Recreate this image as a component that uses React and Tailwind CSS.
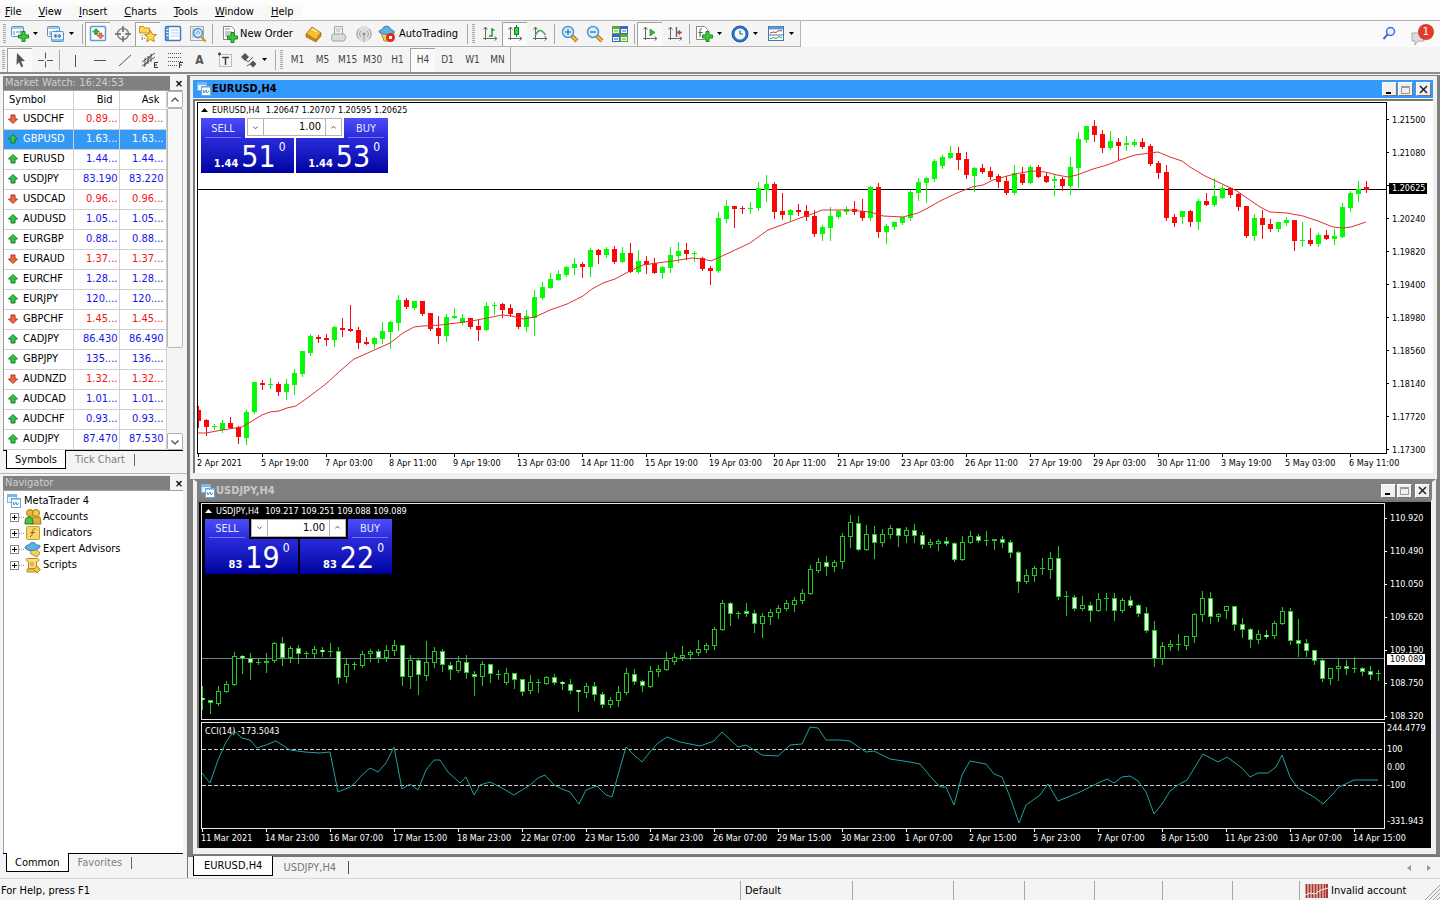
import { useState } from 'react';
import clsx from 'clsx';

// [kind, high, bodyTop, bodyBottom, low], one entry every 8px
const EURUSD = [
  ['d',406,410,421,427],['d',419,420,427,435],['u',424,426,427,429],['u',420,423,430,432],['d',417,423,428,428],['d',426,427,437,443],
  ['u',410,412,438,444],['u',382,382,412,413],['d',380,383,385,389],['u',378,384,385,388],['d',382,384,392,395],['u',379,384,392,399],
  ['u',369,373,385,394],['u',351,351,374,376],['u',334,336,353,355],['d',335,337,339,342],['d',334,338,340,345],['u',326,327,340,346],
  ['d',318,328,330,336],['d',305,329,331,331],['d',327,330,343,348],['d',337,342,344,344],['u',337,338,344,348],['u',322,331,339,343],
  ['u',321,322,332,348],['u',295,300,323,330],['d',298,300,307,308],['u',301,301,308,309],['d',301,301,314,315],['d',313,313,329,330],
  ['d',316,328,336,343],['u',314,317,336,341],['u',308,316,318,318],['u',314,318,323,324],['d',318,318,327,328],['d',320,326,330,340],
  ['u',302,306,330,330],['u',302,305,306,314],['d',303,304,310,317],['d',304,308,314,316],['d',313,313,327,328],['u',310,316,327,331],
  ['u',290,297,318,335],['u',282,287,298,299],['u',273,279,288,288],['u',270,274,280,280],['u',266,267,275,276],['u',258,264,268,274],
  ['d',262,264,267,277],['u',248,250,267,276],['d',249,250,255,263],['u',247,249,255,257],['d',246,249,262,263],['u',247,253,262,262],
  ['d',243,253,272,272],['u',250,261,272,273],['d',256,261,265,273],['d',258,263,273,273],['u',266,267,273,278],['u',247,255,268,272],
  ['u',242,251,256,262],['d',243,250,254,259],['u',251,253,254,261],['d',257,258,269,270],['d',266,268,271,284],['u',212,218,271,272],
  ['u',200,206,219,222],['d',206,206,209,227],['d',206,208,209,213],['u',202,208,209,213],['u',182,188,208,210],['u',175,184,190,201],
  ['d',182,184,212,218],['d',193,211,215,219],['u',209,210,215,221],['d',204,210,212,215],['d',205,211,217,220],['d',210,216,234,236],
  ['u',225,227,234,240],['u',207,216,228,240],['u',210,211,217,218],['u',206,209,212,214],['d',201,209,212,214],['d',199,211,218,220],
  ['u',186,187,218,220],['d',183,187,232,237],['u',224,226,232,243],['u',222,222,227,229],['u',217,217,223,224],['u',190,192,218,220],
  ['u',178,182,193,200],['u',177,178,183,202],['u',159,161,179,181],['u',155,157,166,168],['u',146,153,158,158],['d',147,153,160,169],
  ['d',152,159,175,178],['u',167,168,176,191],['d',164,168,172,173],['d',167,171,177,179],['d',174,176,182,187],['d',176,181,193,194],
  ['u',165,173,193,194],['d',167,174,183,184],['u',165,167,183,183],['d',165,167,177,177],['d',173,176,182,182],['u',174,179,181,195],
  ['d',177,179,186,190],['u',157,167,186,194],['u',132,139,168,187],['u',126,126,140,142],['d',120,126,135,141],['d',130,134,148,152],
  ['u',131,141,148,149],['d',138,142,146,159],['u',136,143,145,150],['u',139,142,145,146],['d',138,142,147,148],['d',144,146,164,165],
  ['d',161,163,173,178],['d',165,172,218,220],['d',214,217,223,226],['u',211,211,217,223],['d',210,211,222,226],['u',199,201,222,229],
  ['d',193,201,205,205],['u',178,196,205,206],['u',185,188,198,198],['d',187,188,195,197],['d',193,194,207,210],['d',206,206,236,237],
  ['u',214,218,236,240],['d',210,218,225,238],['d',219,224,229,231],['u',222,222,229,231],['u',217,220,223,225],['d',220,220,241,250],
  ['u',222,240,241,246],['d',228,240,244,245],['u',233,235,244,246],['d',230,235,239,239],['u',229,236,239,244],['u',203,207,237,237],
  ['u',191,193,208,211],['u',181,189,194,201],['d',181,187,190,192],
];

const EURUSD_MA =
  '198,433 206,433 222,430 242,427 252,421 262,415 270,412 279,411 287,408 296,406 303,401 310,396 327,383 340,371 354,359 370,352 390,343 403,333 414,327 423,326 440,325 457,323 477,320 492,317 502,315 512,316 523,319 535,317 550,310 567,304 583,296 592,289 603,283 615,279 628,272 643,265 657,263 673,261 692,258 703,259 711,261 720,257 733,251 750,243 768,230 787,223 800,218 812,214 822,210 850,210 870,212 883,216 903,217 918,213 928,208 940,201 957,193 972,187 983,185 993,180 1007,176 1020,173 1032,171 1045,172 1057,175 1068,177 1077,175 1093,169 1107,165 1120,160 1135,155 1150,153 1158,152 1170,157 1182,161 1190,167 1205,176 1218,182 1237,191 1247,198 1260,207 1270,212 1287,213 1303,216 1318,221 1333,227 1343,228 1351,227 1366,222';

const USDJPY = [
  ['d',686,698,700,709],['d',700,700,703,713],['u',686,691,704,705],['u',681,684,692,692],['u',652,656,685,685],['d',655,656,658,673],
  ['d',653,658,663,679],['x',658,662,662,664],['u',653,661,663,672],['u',642,643,661,662],['d',637,643,658,665],['u',646,648,658,662],
  ['d',645,648,654,663],['x',651,653,654,658],['u',646,649,654,657],['d',647,650,652,656],['x',643,651,652,656],['d',647,651,678,683],
  ['u',658,664,677,682],['x',662,664,665,669],['u',651,654,666,667],['u',649,651,654,661],['d',649,651,658,662],['u',645,650,658,661],
  ['u',640,645,651,655],['d',645,645,677,685],['u',655,660,677,688],['d',658,660,675,694],['u',641,662,676,680],['u',647,651,663,667],
  ['d',649,651,665,671],['d',662,665,670,679],['u',656,661,671,672],['d',655,662,673,678],['d',671,674,677,695],['u',661,664,677,685],
  ['d',664,664,674,682],['x',670,674,674,679],['u',668,673,683,684],['d',673,673,680,688],['d',679,679,692,695],['u',675,682,691,693],
  ['x',679,682,683,692],['u',676,677,684,684],['d',674,677,683,684],['d',681,682,684,689],['d',679,684,691,693],['d',690,690,692,711],
  ['u',683,686,693,697],['d',682,686,695,700],['d',692,694,705,707],['u',697,700,705,707],['u',686,692,701,706],['u',668,673,693,694],
  ['d',669,674,682,684],['d',680,681,686,691],['u',666,671,687,687],['u',665,669,672,676],['u',652,660,670,670],['u',653,657,662,664],
  ['u',646,655,658,660],['u',650,652,655,659],['u',640,649,653,655],['u',643,645,650,652],['u',627,629,646,649],['u',600,603,630,630],
  ['d',602,603,614,625],['x',611,613,613,618],['d',603,611,614,616],['d',610,613,624,632],['u',613,616,624,637],['u',609,612,617,624],
  ['u',605,608,613,618],['u',600,603,609,610],['u',597,600,605,611],['u',589,593,601,603],['u',565,569,594,594],['u',558,562,571,572],
  ['d',556,562,567,575],['u',560,562,567,571],['u',533,536,562,568],['u',515,522,537,547],['d',516,523,550,550],['u',525,534,550,550],
  ['d',526,534,543,558],['u',529,534,543,546],['u',525,528,535,538],['d',528,528,536,546],['u',527,530,536,542],['d',524,530,536,542],
  ['d',532,535,545,548],['u',539,542,545,547],['u',539,541,544,550],['d',537,541,544,545],['d',542,543,560,561],['u',536,542,560,560],
  ['u',531,536,543,543],['d',534,536,541,542],['x',531,540,541,545],['u',539,539,541,549],['d',536,539,543,547],['d',540,542,553,557],
  ['d',551,552,582,592],['u',569,575,582,583],['u',566,568,576,581],['x',558,568,569,574],['u',552,558,570,578],['d',546,558,597,599],
  ['x',591,596,597,615],['d',595,597,609,610],['u',596,605,609,610],['d',602,605,611,621],['u',593,599,611,611],['x',593,598,599,610],
  ['d',593,598,611,620],['u',598,600,611,612],['d',596,600,606,607],['d',604,605,614,616],['d',607,613,631,632],['d',621,630,659,666],
  ['u',642,646,659,664],['u',640,644,647,650],['x',634,644,645,650],['u',636,636,646,649],['u',613,614,637,642],['u',591,598,615,621],
  ['d',592,598,617,623],['u',613,614,617,621],['u',606,606,611,618],['d',606,606,625,630],['d',618,624,630,637],['d',628,629,640,647],
  ['u',630,634,640,643],['d',630,635,637,638],['u',621,623,636,638],['u',607,611,624,624],['d',608,611,641,644],['d',619,640,644,656],
  ['d',639,643,651,656],['d',650,650,661,664],['d',658,660,679,681],['u',668,668,679,684],['u',659,666,669,680],['d',660,666,669,674],
  ['x',657,668,668,672],['d',667,668,672,675],['d',666,671,675,679],['x',670,673,673,680],
];

const CCI =
  '202,773 210,783 218,760 226,742 234,731 242,738 250,740 257,748 266,745 276,741 290,750 305,752 320,753 330,752 338,792 350,787 355,783 362,775 370,768 378,772 386,763 394,747 402,789 410,784 418,790 426,770 434,760 440,760 448,772 460,783 466,777 474,795 480,785 490,782 500,787 514,795 530,785 538,778 545,775 554,785 562,789 570,792 579,804 586,790 597,786 606,795 612,797 618,775 626,747 634,755 642,762 650,752 658,743 667,737 680,742 700,746 714,741 722,732 738,747 746,745 762,755 778,756 790,745 802,744 810,727 818,728 826,740 840,740 850,741 866,752 874,751 890,759 910,762 920,764 930,776 940,787 946,787 954,805 962,775 970,761 986,764 994,774 1002,777 1010,797 1019,823 1026,805 1040,795 1048,784 1058,801 1068,797 1080,792 1096,784 1107,779 1114,783 1122,777 1130,776 1138,781 1146,792 1154,814 1162,804 1170,791 1178,785 1187,780 1195,767 1203,754 1218,762 1227,757 1242,768 1250,777 1258,773 1268,773 1276,767 1282,755 1290,777 1298,788 1314,797 1323,804 1330,797 1339,787 1354,780 1378,780';

const SYMBOLS = [
  ['USDCHF', '0.89...', '0.89...', 'down'],
  ['GBPUSD', '1.63...', '1.63...', 'up'],
  ['EURUSD', '1.44...', '1.44...', 'up'],
  ['USDJPY', '83.190', '83.220', 'up'],
  ['USDCAD', '0.96...', '0.96...', 'down'],
  ['AUDUSD', '1.05...', '1.05...', 'up'],
  ['EURGBP', '0.88...', '0.88...', 'up'],
  ['EURAUD', '1.37...', '1.37...', 'down'],
  ['EURCHF', '1.28...', '1.28...', 'up'],
  ['EURJPY', '120....', '120....', 'up'],
  ['GBPCHF', '1.45...', '1.45...', 'down'],
  ['CADJPY', '86.430', '86.490', 'up'],
  ['GBPJPY', '135....', '136....', 'up'],
  ['AUDNZD', '1.32...', '1.32...', 'down'],
  ['AUDCAD', '1.01...', '1.01...', 'up'],
  ['AUDCHF', '0.93...', '0.93...', 'up'],
  ['AUDJPY', '87.470', '87.530', 'up'],
];

const EURUSD_TIMES = ['2 Apr 2021', '5 Apr 19:00', '7 Apr 03:00', '8 Apr 11:00', '9 Apr 19:00', '13 Apr 03:00', '14 Apr 11:00', '15 Apr 19:00', '19 Apr 03:00', '20 Apr 11:00', '21 Apr 19:00', '23 Apr 03:00', '26 Apr 11:00', '27 Apr 19:00', '29 Apr 03:00', '30 Apr 11:00', '3 May 19:00', '5 May 03:00', '6 May 11:00'];
const USDJPY_TIMES = ['11 Mar 2021', '14 Mar 23:00', '16 Mar 07:00', '17 Mar 15:00', '18 Mar 23:00', '22 Mar 07:00', '23 Mar 15:00', '24 Mar 23:00', '26 Mar 07:00', '29 Mar 15:00', '30 Mar 23:00', '1 Apr 07:00', '2 Apr 15:00', '5 Apr 23:00', '7 Apr 07:00', '8 Apr 15:00', '11 Apr 23:00', '13 Apr 07:00', '14 Apr 15:00'];
const EURUSD_PRICES = ['1.21500', '1.21080', '', '1.20240', '1.19820', '1.19400', '1.18980', '1.18560', '1.18140', '1.17720', '1.17300'];
const USDJPY_PRICES = ['110.920', '110.490', '110.050', '109.620', '109.190', '108.750', '108.320'];

const MENU = ['File', 'View', 'Insert', 'Charts', 'Tools', 'Window', 'Help'];
const TIMEFRAMES = ['M1', 'M5', 'M15', 'M30', 'H1', 'H4', 'D1', 'W1', 'MN'];

/* ---------- icons ---------- */

function Svg({ size = 18, children }) {
  return (
    <svg width={size} height={size} viewBox={`0 0 ${size} ${size}`} fill="none" className="shrink-0" aria-hidden="true">
      {children}
    </svg>
  );
}

const Plus = ({ x = 8, y = 6 }) => (
  <path transform={`translate(${x} ${y})`} d="M4 .5h3V4h3.500v3H7v3.500H4V7H.5V4H4z" fill="#35cf3a" stroke="#128a1b" />
);

const ChartWindow = ({ x = 0, y = 0 }) => (
  <g transform={`translate(${x} ${y})`}>
    <rect x=".5" y=".5" width="12" height="10" rx="1" fill="#fff" stroke="#4d94d0" />
    <rect x="1" y="1" width="11" height="2" fill="#9dc9ee" />
    <path d="M3 5v4M5 6h5M10 4v5" stroke="#5c86ae" />
  </g>
);

const NewChartIcon = () => <Svg><ChartWindow y={1} /><Plus x={7} y={6} /></Svg>;
const ProfilesIcon = () => <Svg><ChartWindow x={0} y={1} /><rect x="4.500" y="6.500" width="12" height="10" rx="1" fill="#e8f3fc" stroke="#4d94d0" /><path d="M5 15h11" stroke="#8dbfe8" strokeWidth="2" /><path d="M7 11l2-2v4zM14 11l-2-2v4zM8 11h5" fill="#5c86ae" stroke="#5c86ae" /></Svg>;
const MarketWatchIcon = () => (
  <Svg>
    <rect x="1.500" y="1.500" width="15" height="14" rx="1" fill="#fff" stroke="#5a9fd6" strokeWidth="1.500" />
    <path d="M7 3.500l3.500 3.500H8.500v2.500h-3V7h-2z" fill="#35b03c" stroke="#1d8226" strokeWidth=".6" />
    <path d="M11.500 14l-3.500-3.500h2V8h3v2.500h2z" fill="#f07a4c" stroke="#c0451e" strokeWidth=".6" />
  </Svg>
);
const TargetIcon = () => <Svg><circle cx="9" cy="9" r="5.500" stroke="#888" strokeWidth="1.500" /><path d="M9 1v6M9 11v6M1 9h6M11 9h6" stroke="#666" strokeWidth="1.500" /></Svg>;
const FavoritesIcon = () => (
  <Svg>
    <path d="M.5 1.500h4l1 1.500h5v5h-10z" fill="#fbd65c" stroke="#c49521" />
    <path d="M3 10v6M3 13.500h4" stroke="#777" strokeDasharray="1 1" />
    <path d="M11.500 5.500l1.800 3.800 4.200.4-3.100 2.800 1 4.200-3.900-2.200-3.800 2.200.9-4.200-3-2.800 4.100-.4z" fill="#ffd84e" stroke="#b98a1c" />
  </Svg>
);
const DataWindowIcon = () => <Svg><rect x="1.500" y="1.500" width="15" height="14" rx="1" fill="#fff" stroke="#3c7fc0" strokeWidth="1.500" /><path d="M3.500 2v13" stroke="#5c9cd6" strokeWidth="3" /><path d="M7 5h8M7 8h8M7 11h8" stroke="#b7cde2" /><path d="M3.500 4v1M3.500 7v1M3.500 10v1" stroke="#fff" strokeWidth="2" /></Svg>;
const TesterIcon = () => <Svg><rect x="1.500" y="1.500" width="13" height="14" fill="#eee" stroke="#a9a9a9" /><path d="M4 3v10M7 4v8" stroke="#9db8cf" /><circle cx="9" cy="8" r="4.500" fill="#cfe6f8" stroke="#4a90cd" strokeWidth="1.500" /><path d="M7 9l2-3 2 3" stroke="#7e9db8" /><path d="M12.500 12l4 4.500" stroke="#d39b27" strokeWidth="2.500" /></Svg>;
const NewOrderIcon = () => <Svg><path d="M2.500 1.500h8l3 3v10h-11z" fill="#fff" stroke="#888" /><path d="M4 4h5M4 7h7M4 9h7M4 11h4" stroke="#8f8f8f" /><Plus x={6} y={7} /></Svg>;
const BookIcon = () => <Svg><path d="M1 9l6-7 9 6-5 7z" fill="#f3bd3c" stroke="#b27b13" /><path d="M1 9v3l10 5 5-6V8l-5 7z" fill="#c98c1b" stroke="#a06c10" strokeWidth=".7" /><path d="M7 4l5 3" stroke="#ffe7a3" strokeWidth="2" /></Svg>;
const PrinterIcon = () => <Svg><path d="M4.500 1.500h8v8h-8z" fill="#f0f0f0" stroke="#a5a5a5" /><path d="M6 4h5M6 6h4" stroke="#b5b5b5" /><path d="M2 13a2.500 2.500 0 012-4h9a3 3 0 012 5 2 2 0 01-2 2H3a2 2 0 01-1-3z" fill="#dcdcdc" stroke="#a0a0a0" /></Svg>;
const SignalIcon = () => <Svg><circle cx="9" cy="9" r="8" fill="#dedede" /><circle cx="9" cy="9" r="1.500" fill="#8e8e8e" /><path d="M6 12a4 4 0 010-6M12 6a4 4 0 010 6M4 14a7 7 0 010-10M14 4a7 7 0 010 10M9 10v7" stroke="#a2a2a2" /></Svg>;
const AutoTradingIcon = () => (
  <Svg>
    <path d="M3 8h12l-3 8H6z" fill="#f2ca4c" stroke="#b98c1f" />
    <path d="M1 7c0-2 2-2 3-2 1-5 8-5 9 0 2 0 4 1 3 3-4 2-11 2-15-1z" fill="#63b0e2" stroke="#357fb4" />
    <circle cx="12.500" cy="12.500" r="4.500" fill="#dc2c20" />
    <rect x="11" y="11" width="3" height="3" fill="#fff" />
  </Svg>
);
const Axes = () => <path d="M4.500 2v13M2 13.500h14M2.500 4.500l2-2.500 2 2.500M13.500 11.500l2.500 2-2.500 2" stroke="#666" />;
const BarChartIcon = () => <Svg><Axes /><path d="M8 11h3V3M11 5h2.500" stroke="#1d9a33" strokeWidth="1.500" /></Svg>;
const CandleIcon = () => <Svg><Axes /><path d="M10.500 0v12" stroke="#138a24" /><rect x="8.500" y="2.500" width="4" height="7" fill="#2fd13f" stroke="#138a24" /></Svg>;
const LineIcon = () => <Svg><Axes /><path d="M4.500 10c3-6 6-6 10 0" stroke="#3fa84c" strokeWidth="1.500" /></Svg>;
const ZoomIcon = ({ plus }) => <Svg><path d="M11 11l5 5" stroke="#a77b1d" strokeWidth="4" /><path d="M11 11l5 5" stroke="#f0c04a" strokeWidth="2" /><circle cx="7" cy="7" r="5.500" fill="#d9edfb" stroke="#4a97d6" strokeWidth="1.500" /><path d={plus ? 'M4 7h6M7 4v6' : 'M4 7h6'} stroke="#3c84c1" strokeWidth="1.500" /></Svg>;
const TileIcon = () => (
  <Svg>
    {[[1, 1, '#58ab2c'], [9, 1, '#3567c9'], [1, 9, '#3567c9'], [9, 9, '#58ab2c']].map(([x, y, c]) => (
      <g key={`${x}${y}`}><rect x={x} y={y} width="8" height="8" fill={c} /><rect x={x + 1} y={y + 3} width="6" height="4" fill="#eef5e8" /><path d={`M${x + 2} ${y + 5}h4`} stroke={c} /></g>
    ))}
  </Svg>
);
const AutoScrollIcon = () => <Svg><Axes /><path d="M9 4v7l5-3.500z" fill="#35b846" stroke="#158a26" strokeWidth=".7" /></Svg>;
const ShiftIcon = () => <Svg><Axes /><path d="M10.500 2v10" stroke="#3a6ea8" strokeWidth="1.500" /><path d="M16 7.500h-4M14 5.500l-2 2 2 2" stroke="#c5431d" strokeWidth="1.500" /></Svg>;
const IndicatorsIcon = () => <Svg><path d="M1.500 1.500h8l3 3v10h-11z" fill="#fff" stroke="#888" /><path d="M7 4c-2-1-2 1-2 3v5M3.500 7.500h4" stroke="#555" /><Plus x={7} y={6} /></Svg>;
const ClockIcon = () => <Svg><circle cx="9" cy="9" r="8" fill="#2a76c4" stroke="#1c5594" /><circle cx="9" cy="9" r="5.500" fill="#f1f7fc" /><path d="M9 5.500V9h3" stroke="#4d6478" strokeWidth="1.200" /></Svg>;
const TemplateIcon = () => <Svg><rect x="1.500" y="1.500" width="15" height="14" fill="#fff" stroke="#3e78b5" /><path d="M2 3h14" stroke="#5b9bd8" strokeWidth="3" /><path d="M2 10h14" stroke="#3e78b5" /><path d="M3 8l3-1 3 .5 3-2 3 .5" stroke="#b4452c" /><path d="M3 14l3-1.500 3 1 3-2 3 1.500" stroke="#3d9a45" /></Svg>;

const CursorIcon = () => <Svg><path d="M6 2l8 8-4 .3 2.300 5-2 1-2.300-5L5.500 14z" fill="#555" /></Svg>;
const CrossIcon = () => <Svg><path d="M9.500 1.500v6M9.500 10.500v6M2 9.500h6M11 9.500h6" stroke="#555" /></Svg>;
const VLineIcon = () => <Svg><path d="M9.500 4v12" stroke="#555" /></Svg>;
const HLineIcon = () => <Svg><path d="M3 9.500h12" stroke="#555" /></Svg>;
const TrendIcon = () => <Svg><path d="M3 15L15 4" stroke="#555" /></Svg>;
const ChannelIcon = () => <Svg><path d="M1 11L14 2M1 15L14 6M4 7v8M7 5v8M10 3v8M3 16l8-13" stroke="#555" /><path d="M17 11.500h-3.500v5H17M13.500 14H16" stroke="#333" /></Svg>;
const FiboIcon = () => <Svg><path d="M2 2.500h14M2 6.500h14M2 10.500h14M2 14.500h9" stroke="#555" strokeDasharray="1 1" /><path d="M17 11.500h-3.500V17M13.500 14H16" stroke="#333" /></Svg>;
const LabelIcon = () => <Svg><rect x="3.500" y="3.500" width="12" height="12" stroke="#888" strokeDasharray="1 1" /><path d="M6 6.500h7M9.500 6v8M2 3h3M3.500 1.500v3" stroke="#444" strokeWidth="1.500" /></Svg>;
const ArrowsIcon = () => <Svg><path d="M5 2l4 4-4 4-4-4zM13 9.500l3.500 3.500-3.500 3.500L9.500 13z" fill="#555" /><path d="M6 9l2 2 5-5M7 15l3-2" stroke="#555" /></Svg>;

const WindowIcon = () => (
  <Svg size={14}>
    <rect x=".5" y=".5" width="9" height="8" fill="#e7f3fd" stroke="#7db6e6" />
    <path d="M1 2h8" stroke="#7db6e6" strokeWidth="2" />
    <rect x="4.500" y="4.500" width="9" height="9" fill="#fff" stroke="#6aa9de" />
    <path d="M5 5.500h8" stroke="#9ccaf0" />
    <path d="M6 8l1 3 2-3 1 3 2-2" stroke="#4a8ac4" />
  </Svg>
);

function Arrow({ dir }) {
  return (
    <svg width="12" height="12" viewBox="0 0 12 12" className="shrink-0" aria-hidden="true">
      {dir === 'up' ? (
        <path d="M6 1.500l4.500 4.500H8v4H4V6H1.500z" fill="#35c544" stroke="#12752a" />
      ) : (
        <path d="M6 10.500L1.500 6H4V2h4v4h2.500z" fill="#f0683c" stroke="#a8361a" />
      )}
    </svg>
  );
}

const Caret = () => <svg width="5" height="3" viewBox="0 0 5 3" aria-hidden="true"><path d="M0 0h5L2.500 3z" fill="#000" /></svg>;

/* ---------- toolbar ---------- */

function ToolButton({ label, icon, active }) {
  return (
    <button aria-label={label} className={clsx('flex h-6 w-[25px] items-center justify-center', active && 'border-l border-t border-[#a0a0a0] bg-[#fafafa]')}>
      {icon}
    </button>
  );
}

function DropButton({ label, icon }) {
  return (
    <button aria-label={label} className="flex h-6 w-9 items-center gap-1 pl-[3px]">
      {icon}
      <Caret />
    </button>
  );
}

const Separator = () => <span className="mx-[2px] h-5 w-px bg-[#a8a8a8]" />;
const Grip = () => <span className="mx-[2px] h-5 w-[3px] bg-[repeating-linear-gradient(to_bottom,#a8a8a8_0_1px,#f4f4f4_1px_2px)]" />;

function MainToolbar() {
  return (
    <div className="flex h-[27px] items-center border-t border-[#b4b4b4] bg-[#fafafa] text-[11px]">
      <div className="flex h-full items-center border-r border-b border-[#b4b4b4] bg-[#f4f4f4] pl-px">
        <Grip />
        <DropButton label="New chart" icon={<NewChartIcon />} />
        <DropButton label="Profiles" icon={<ProfilesIcon />} />
        <Separator />
        <ToolButton label="Market Watch" icon={<MarketWatchIcon />} active />
        <ToolButton label="Crosshair" icon={<TargetIcon />} />
        <ToolButton label="Navigator" icon={<FavoritesIcon />} active />
        <ToolButton label="Data Window" icon={<DataWindowIcon />} />
        <ToolButton label="Strategy Tester" icon={<TesterIcon />} />
        <Separator />
        <button className="flex h-6 w-[86px] items-center gap-px pl-[6px]"><NewOrderIcon />New Order</button>
        <ToolButton label="MetaEditor" icon={<BookIcon />} />
        <ToolButton label="Print" icon={<PrinterIcon />} />
        <ToolButton label="Signals" icon={<SignalIcon />} />
        <button className="flex h-6 w-[89px] items-center gap-[3px] pl-[2px]"><AutoTradingIcon />AutoTrading</button>
        <Separator />
        <Grip />
        <ToolButton label="Bar chart" icon={<BarChartIcon />} />
        <ToolButton label="Candlesticks" icon={<CandleIcon />} active />
        <ToolButton label="Line chart" icon={<LineIcon />} />
        <Separator />
        <ToolButton label="Zoom in" icon={<ZoomIcon plus />} />
        <ToolButton label="Zoom out" icon={<ZoomIcon />} />
        <ToolButton label="Tile windows" icon={<TileIcon />} />
        <Separator />
        <ToolButton label="Auto scroll" icon={<AutoScrollIcon />} active />
        <ToolButton label="Chart shift" icon={<ShiftIcon />} />
        <Separator />
        <DropButton label="Indicators" icon={<IndicatorsIcon />} />
        <DropButton label="Periods" icon={<ClockIcon />} />
        <DropButton label="Templates" icon={<TemplateIcon />} />
      </div>
      <div className="ml-auto flex items-center gap-3 pr-[6px]">
        <button aria-label="Search">
          <Svg><circle cx="10.500" cy="6.500" r="4" fill="#eaf1fd" stroke="#3b6fd8" strokeWidth="1.500" /><path d="M7.500 9.500l-4 4.500" stroke="#3b6fd8" strokeWidth="2" /></Svg>
        </button>
        <button aria-label="Messages" className="relative flex h-6 w-6 items-end">
          <Svg><path d="M2 5h12v8H8l-3 4v-4H2z" fill="#ddd" stroke="#aaa" /></Svg>
          <span className="absolute right-0 top-[2px] flex h-4 w-4 items-center justify-center rounded-full bg-[#e03a2c] text-[11px] text-white">1</span>
        </button>
      </div>
    </div>
  );
}

function LineToolbar() {
  const [active, setActive] = useState('H4');

  return (
    <div className="flex h-[27px] items-center border-b-2 border-[#8a8a8a] bg-[#f4f4f4] text-[10px] text-[#444]">
      <Grip />
      <ToolButton label="Cursor" icon={<CursorIcon />} active />
      <ToolButton label="Crosshair" icon={<CrossIcon />} />
      <Separator />
      <ToolButton label="Vertical line" icon={<VLineIcon />} />
      <ToolButton label="Horizontal line" icon={<HLineIcon />} />
      <ToolButton label="Trendline" icon={<TrendIcon />} />
      <ToolButton label="Equidistant channel" icon={<ChannelIcon />} />
      <ToolButton label="Fibonacci" icon={<FiboIcon />} />
      <ToolButton label="Text" icon={<span className="text-xs font-bold text-[#555]">A</span>} />
      <ToolButton label="Text label" icon={<LabelIcon />} />
      <DropButton label="Arrows" icon={<ArrowsIcon />} />
      <Separator />
      <Grip />
      {TIMEFRAMES.map((tf) => (
        <button
          key={tf}
          onClick={() => setActive(tf)}
          className={clsx('h-6 w-[25px] text-center', active === tf && 'border-l border-t border-[#a0a0a0] bg-[#fafafa]')}
        >
          {tf}
        </button>
      ))}
      <span className="h-full w-px bg-[#a8a8a8]" />
    </div>
  );
}

/* ---------- side panels ---------- */

function PanelTitle({ children }) {
  return (
    <div className="flex h-[15px] items-center gap-[3px] pl-[3px] pt-px">
      <h2 className="h-[14px] w-[167px] bg-[#808080] pl-[2px] text-[11px] leading-[13px] text-[#d0d0d0]">{children}</h2>
      <button aria-label="Close panel" className="w-3 text-[11px] font-bold leading-[13px]">×</button>
    </div>
  );
}

function PanelTabs({ active, other }) {
  return (
    <div className="ml-[3px] mr-1 flex h-[19px] border-t border-black pl-[3px]">
      <button className="-mt-px border-x border-b border-black bg-white px-2 pt-px">{active}</button>
      <button className="px-[9px] text-[#808080]">{other}</button>
      <span className="my-[3px] w-px bg-[#666]" />
    </div>
  );
}

function MarketWatch() {
  return (
    <section>
      <PanelTitle>Market Watch: 16:24:53</PanelTitle>
      <div className="ml-[3px] mr-1 flex h-[360px] overflow-hidden border-l border-t border-[#a0a0a0] bg-white">
        <table className="w-[162px] table-fixed border-collapse self-start">
          <colgroup>
            <col className="w-[69px]" />
            <col className="w-[46px]" />
            <col className="w-[47px]" />
          </colgroup>
          <thead>
            <tr className="h-[18px]">
              <th className="border-r border-b border-[#d0d0d0] pl-[5px] text-left font-normal">Symbol</th>
              <th className="border-r border-b border-[#d0d0d0] pr-[6px] text-right font-normal">Bid</th>
              <th className="border-r border-b border-[#d0d0d0] pr-[6px] text-right font-normal">Ask</th>
            </tr>
          </thead>
          <tbody>
            {SYMBOLS.map(([name, bid, ask, dir]) => {
              const selected = name === 'GBPUSD';
              return (
                <tr key={name} className={clsx('h-5', selected ? 'bg-[#3399f5] text-white' : dir === 'up' ? 'text-[#1414e6]' : 'text-[#f01414]')}>
                  <td className="border-r border-b border-[#d0d0d0] p-0">
                    <span className={clsx('flex items-center gap-1 pl-[3px]', !selected && 'text-black')}>
                      <Arrow dir={dir} />
                      {name}
                    </span>
                  </td>
                  <td className="border-r border-b border-[#d0d0d0] p-0 pr-px text-right">{bid}</td>
                  <td className="border-r border-b border-[#d0d0d0] p-0 pr-[2px] text-right">{ask}</td>
                </tr>
              );
            })}
          </tbody>
        </table>
        <div className="flex flex-1 flex-col bg-[#f4f4f4]">
          <button aria-label="Scroll up" className="flex h-[17px] items-center justify-center rounded-xs border border-[#b0b0b0] bg-white">
            <Chevron />
          </button>
          <span className="h-60 rounded-xs border border-[#b8b8b8] bg-[#f8f8f8]" />
          <button aria-label="Scroll down" className="mt-auto flex h-[17px] items-center justify-center rounded-xs border border-[#b0b0b0] bg-white">
            <Chevron down />
          </button>
        </div>
      </div>
      <PanelTabs active="Symbols" other="Tick Chart" />
    </section>
  );
}

function Chevron({ down, small }) {
  const size = small ? 5 : 8;
  return (
    <svg width={size} height={size} viewBox="0 0 8 8" fill="none" aria-hidden="true">
      <path d={down ? 'M.5 2.500L4 6l3.500-3.500' : 'M.5 5.500L4 2l3.500 3.500'} stroke="#444" strokeWidth={small ? 1.5 : 1.2} />
    </svg>
  );
}

const AccountsIcon = () => <Svg><circle cx="6" cy="5" r="3.500" fill="#e9b93a" stroke="#a87d16" /><circle cx="12" cy="5" r="3.500" fill="#f0c84a" stroke="#a87d16" /><path d="M8 16V9h8l1 7z" fill="#e3b02f" stroke="#a87d16" /><path d="M1 16c0-5 1-7 4-7s4 2 4 7z" fill="#4cc23e" stroke="#237a1e" /></Svg>;
const FolderFIcon = () => <Svg><rect x="2.500" y="2.500" width="13" height="13" rx="1" fill="#f7d66c" stroke="#c29a2d" /><path d="M11.500 5c-2-1-2.500.5-3 3.500s-1 4-2.500 4M6.500 8.500h4.500" stroke="#7c601c" /></Svg>;
const ExpertIcon = () => <Svg><path d="M6 10l5-2 5 5-3 4-6-3z" fill="#f3cf63" stroke="#b88d25" /><path d="M1 8c0-2 2-3 4-3 1-3 6-4 7 0 2 0 5 0 4 2-3 4-12 5-15 1z" fill="#5fb2e0" stroke="#2f7eb0" /></Svg>;
const ScriptIcon = () => <Svg><path d="M3.500 2.500h10c2 0 2 3 0 3h-1v7h-8v-7c-3 0-3-3-1-3z" fill="#f9dc7d" stroke="#b88d25" /><path d="M3 13h9v3H3z" fill="#f3cb54" stroke="#b88d25" /><path d="M6 7h4M6 9h4" stroke="#b88d25" /><path d="M13 10l3.500 3.500L13 17l-3.500-3.500z" fill="#f3c43d" stroke="#b88d25" /></Svg>;

const TREE = [
  { name: 'Accounts', Icon: AccountsIcon },
  { name: 'Indicators', Icon: FolderFIcon },
  { name: 'Expert Advisors', Icon: ExpertIcon },
  { name: 'Scripts', Icon: ScriptIcon },
];

function Navigator() {
  return (
    <section className="flex min-h-0 flex-1 flex-col border-t border-[#b8b8b8] pt-[1px]">
      <PanelTitle>Navigator</PanelTitle>
      <div className="ml-[3px] mr-1 min-h-0 flex-1 border-l border-t border-[#a0a0a0] bg-white pl-[3px] pt-[2px]">
        <p className="flex h-4 items-center gap-[3px]"><WindowIcon />MetaTrader 4</p>
        <ul>
          {TREE.map(({ name, Icon }) => (
            <li key={name} className="flex h-4 items-center pl-[3px]">
              <button aria-label={`Expand ${name}`} className="flex h-[9px] w-[9px] items-center justify-center border border-[#8a8a8a] bg-white">
                <svg width="5" height="5" viewBox="0 0 5 5" aria-hidden="true"><path d="M0 2.500h5M2.500 0v5" stroke="#000" /></svg>
              </button>
              <span className="w-[5px] border-t border-dotted border-[#999]" />
              <Icon />
              <span className="pl-[1px]">{name}</span>
            </li>
          ))}
        </ul>
      </div>
      <PanelTabs active="Common" other="Favorites" />
    </section>
  );
}

/* ---------- chart windows ---------- */

function Candles({ data, x0, up, down, downFill, hollow }) {
  return data.map(([kind, high, top, bottom, low], i) => {
    const x = x0 + i * 8;
    const color = kind === 'd' ? down : up;
    const height = Math.max(bottom - top, 1);
    return (
      <g key={i} shapeRendering="crispEdges">
        <rect x={x} y={high} width="1" height={low - high + 1} fill={color} />
        <rect x={x - 2} y={top} width="5" height={height} fill={color} />
        {hollow && kind !== 'x' && height > 2 && (
          <rect x={x - 1} y={top + 1} width="3" height={height - 2} fill={kind === 'd' ? downFill : '#000'} />
        )}
        {hollow && kind === 'd' && height <= 2 && <rect x={x - 1} y={top} width="3" height={height} fill="#a8f5a8" />}
      </g>
    );
  });
}

function PriceButton({ side, small, big }) {
  return (
    <button aria-label={`${side} at ${small}${big}0`} className="flex h-[35px] flex-1 items-end justify-end bg-linear-to-b from-[#2a2adb] to-[#0000a0] pr-2 text-white">
      <span className="pb-[3px] pr-[3px] text-[11px] font-bold leading-3">{small}</span>
      <span className="pb-px text-[30px] leading-[30px]">{big}</span>
      <span className="self-start pl-[3px] pt-[2px] text-xs leading-[14px]">0</span>
    </button>
  );
}

const SideButton = ({ children }) => (
  <button className="h-5 w-11 bg-linear-to-b from-[#4c4cfa] to-[#2a2adb] px-1 text-[11px] leading-5 text-[#e4e4ff]">
    <span className="block h-[19px] border-b border-[#7474f4]">{children}</span>
  </button>
);

function OneClick({ small, sell, buy }) {
  return (
    <div className="absolute left-[3px] top-[15px] w-[187px]">
      <div className="flex justify-between">
        <SideButton>SELL</SideButton>
        <div className="flex h-[18px] w-[95px] border border-[#b4b4b4] bg-white">
          <button aria-label="Decrease volume" className="flex w-4 items-center justify-center border-r border-[#b4b4b4]"><Chevron down small /></button>
          <input aria-label="Volume" defaultValue="1.00" className="min-w-0 flex-1 bg-white pr-1 text-right text-[11px] text-black outline-none" />
          <button aria-label="Increase volume" className="flex w-4 items-center justify-center border-l border-[#b4b4b4]"><Chevron small /></button>
        </div>
        <SideButton>BUY</SideButton>
      </div>
      <div className="flex gap-[2px]">
        <PriceButton side="Sell" small={small} big={sell} />
        <PriceButton side="Buy" small={small} big={buy} />
      </div>
    </div>
  );
}

const ChartInfo = ({ symbol, values }) => (
  <p className="absolute left-[3px] top-px flex items-center gap-1 text-[9px] leading-3">
    <svg width="7" height="4" viewBox="0 0 7 4" aria-hidden="true"><path d="M0 4h7L3.500 0z" fill="currentColor" /></svg>
    <span>{symbol}</span>
    <span className="pl-[2px]">{values}</span>
  </p>
);

const TimeAxis = ({ labels }) => (
  <div className="flex h-[19px] text-[9px] leading-3">
    {labels.map((t) => (
      <div key={t} className="w-16 shrink-0 pl-px">
        <span className="block h-[3px] w-px bg-current" />
        <span className="-ml-px block whitespace-nowrap">{t}</span>
      </div>
    ))}
  </div>
);

const PriceAxis = ({ labels, current, className }) => (
  <div className="relative text-[9px]">
    {labels.map((p, i) => (
      <div key={i} className="flex h-[33px] items-center gap-[3px]">
        <span className="h-px w-[2px] bg-current" />
        {p}
      </div>
    ))}
    <span className={clsx('absolute left-[2px] pl-[3px] pr-[2px] leading-[11px]', className)}>{current}</span>
  </div>
);

function ChartPane({ title, active, children, className }) {
  return (
    <section className={clsx('flex min-h-0 flex-col overflow-hidden border-[#f0f0f0] bg-[#f4f4f4]', className)}>
      <header className={clsx('flex h-[18px] shrink-0 items-center gap-px pl-1 pr-[2px]', active ? 'bg-[#3399fa]' : 'bg-[#808080]')}>
        <WindowIcon />
        <h2 className={clsx('flex-1 text-[11px] font-bold', active ? 'text-black' : 'text-[#c8c8c8]')}>{title}</h2>
        {['Minimize', 'Maximize', 'Close'].map((label, i) => (
          <button key={label} aria-label={label} className={clsx('flex h-[14px] w-[15px] items-center justify-center border border-r-[#777] border-b-[#777] border-t-white border-l-white bg-[#f0f0f0]', i === 1 && 'mr-[2px]')}>
            <svg width="9" height="9" viewBox="0 0 9 9" fill="none" aria-hidden="true">
              {i === 0 && <path d="M1 8h5" stroke="#000" strokeWidth="2" />}
              {i === 1 && <path d="M.5 2.500h8v6h-8zM0 1.500h9" stroke="#999" />}
              {i === 2 && <path d="M1 1l7 7M8 1L1 8" stroke="#222" strokeWidth="1.500" />}
            </svg>
          </button>
        ))}
      </header>
      {children}
    </section>
  );
}

function EurUsdWindow() {
  return (
    <ChartPane title="EURUSD,H4" active className="mr-[3px] border-b-[6px] border-l-[3px] border-r-4 border-t-4">
      <div className="mt-px grid min-h-0 flex-1 grid-cols-[1fr_46px] overflow-hidden border-l-2 border-t-2 border-[#777] bg-white pl-[2px] pt-px text-black">
        <div className="flex min-h-0 min-w-0 flex-col">
          <div className="relative min-h-0 flex-1 overflow-hidden border border-black">
            <svg className="block h-full w-full" aria-hidden="true">
              <g transform="translate(-198 -103)">
                <rect x="198" y="189" width="3000" height="1" fill="#000" />
                <Candles data={EURUSD} x0={198} up="#08f808" down="#fa0808" />
                <polyline points={EURUSD_MA} fill="none" stroke="#e03030" />
              </g>
            </svg>
            <ChartInfo symbol="EURUSD,H4" values="1.20647 1.20707 1.20595 1.20625" />
            <OneClick small="1.44" sell="51" buy="53" />
          </div>
          <TimeAxis labels={EURUSD_TIMES} />
        </div>
        <div className="min-h-0 pt-[1px]">
          <PriceAxis labels={EURUSD_PRICES} current="1.20625" className="top-[80px] bg-black text-white" />
        </div>
      </div>
    </ChartPane>
  );
}

function UsdJpyWindow() {
  return (
    <ChartPane title="USDJPY,H4" className="ml-[3px] mr-1 border-x-4 border-b-[6px] border-t-[3px] border-t-[#808080]">
      <div className="mr-px grid min-h-0 flex-1 grid-cols-[1fr_46px] overflow-hidden border-l-2 border-t-2 border-[#777] bg-black pl-[2px] pt-px text-white">
        <div className="flex min-h-0 min-w-0 flex-col">
          <div className="relative min-h-0 flex-1 overflow-hidden border border-[#e8e8e8]">
            <svg className="block h-full w-full" aria-hidden="true">
              <g transform="translate(-202 -504)">
                <rect x="202" y="658" width="3000" height="1" fill="#708090" />
                <Candles data={USDJPY} x0={202} up="#20c820" down="#20c820" downFill="#e6ffe6" hollow />
              </g>
            </svg>
            <ChartInfo symbol="USDJPY,H4" values="109.217 109.251 109.088 109.089" />
            <OneClick small="83" sell="19" buy="22" />
          </div>
          <div className="relative mt-[2px] h-[107px] shrink-0 overflow-hidden border border-[#e8e8e8]">
            <svg className="block h-full w-full" aria-hidden="true">
              <g transform="translate(-202 -723)">
                <path d="M202 749.500h3000M202 785.500h3000" stroke="#ccc" strokeDasharray="4 2" />
                <polyline points={CCI} fill="none" stroke="#20a0a0" />
              </g>
            </svg>
            <p className="absolute left-[3px] top-[2px] text-[9px] leading-3">CCI(14) -173.5043</p>
          </div>
          <TimeAxis labels={USDJPY_TIMES} />
        </div>
        <div className="flex min-h-0 flex-col">
          <div className="-mt-px min-h-0 flex-1">
            <PriceAxis labels={USDJPY_PRICES} current="109.089" className="top-[152px] bg-white text-black" />
          </div>
          <div className="flex h-[126px] shrink-0 flex-col pl-[2px] text-[9px] leading-3">
            <span className="h-[21px]">244.4779</span>
            <span className="h-[18px]">100</span>
            <span className="h-[18px]">0.00</span>
            <span className="h-9">-100</span>
            <span>-331.943</span>
          </div>
        </div>
      </div>
    </ChartPane>
  );
}

/* ---------- status bar ---------- */

function StatusBar() {
  return (
    <footer className="flex h-[22px] items-stretch border-t border-[#d8d8d8] bg-[#f4f4f4] pt-[2px] leading-5">
      <span className="flex-1 pl-px">For Help, press F1</span>
      <span className="w-28 border-l border-[#a8a8a8] pl-1">Default</span>
      <span className="w-[101px] border-l border-[#a8a8a8]" />
      <span className="w-[71px] border-l border-[#a8a8a8]" />
      <span className="w-[70px] border-l border-[#a8a8a8]" />
      <span className="w-[68px] border-l border-[#a8a8a8]" />
      <span className="w-[70px] border-l border-[#a8a8a8]" />
      <span className="w-[67px] border-l border-[#a8a8a8]" />
      <span className="flex w-[141px] items-center gap-[3px] border-l border-[#a8a8a8] pl-[5px]">
        <svg width="23" height="14" viewBox="0 0 23 14" aria-hidden="true">
          <path d="M1.500 0v14M4.500 0v14M7.500 0v14M10.500 0v14M13.500 0v14M16.500 0v14M19.500 0v14M22 0v14" stroke="#a8342a" strokeWidth="2" />
          <path d="M0 11l5-2 5 1 6-4 7-2" stroke="#f4f4f4" fill="none" />
        </svg>
        Invalid account
        <svg width="15" height="15" viewBox="0 0 15 15" className="ml-auto self-end" aria-hidden="true">
          <path d="M0 15L15 0M4 15L15 4M8 15l7-7M12 15l3-3" stroke="#999" />
        </svg>
      </span>
    </footer>
  );
}

export default function App() {
  return (
    <div className="flex h-screen flex-col overflow-hidden bg-[#f4f4f4] font-['DejaVu_Sans_Condensed','DejaVu_Sans',sans-serif] text-[11px] leading-[14px] text-black">
      <nav className="flex h-5 items-center bg-[#fdfdfd] pt-1">
        <div className="flex gap-[17px] bg-[#f8f8f8] pl-[5px] pr-2">
          {MENU.map((item) => (
            <button key={item}><u>{item[0]}</u>{item.slice(1)}</button>
          ))}
        </div>
      </nav>
      <MainToolbar />
      <LineToolbar />
      <div className="flex min-h-0 flex-1 pt-px">
        <aside className="flex w-[187px] shrink-0 flex-col">
          <MarketWatch />
          <div className="h-1" />
          <Navigator />
          <div className="h-[6px]" />
        </aside>
        <main className="flex min-w-0 flex-1 flex-col border-l border-[#777]">
          <div className="grid min-h-0 flex-1 grid-rows-[402fr_375fr] border-b-2 border-[#777] bg-[#808080] pb-px pl-[2px] pt-px">
            <EurUsdWindow />
            <UsdJpyWindow />
          </div>
          <div className="flex h-[21px] pl-[5px] text-[11px]">
            <button className="-mt-px mb-[2px] border-x border-b border-black bg-white px-[10px] pt-px">EURUSD,H4</button>
            <button className="px-[10px] text-[#777]">USDJPY,H4</button>
            <span className="my-1 ml-[2px] w-px bg-[#555]" />
            <span className="ml-auto flex items-center gap-[14px] pr-[9px]">
              <button aria-label="Scroll tabs left"><svg width="5" height="6" viewBox="0 0 5 6" aria-hidden="true"><path d="M4 0v6L0 3z" fill="#999" /></svg></button>
              <button aria-label="Scroll tabs right"><svg width="5" height="6" viewBox="0 0 5 6" aria-hidden="true"><path d="M1 0v6l4-3z" fill="#999" /></svg></button>
            </span>
          </div>
        </main>
      </div>
      <StatusBar />
    </div>
  );
}
